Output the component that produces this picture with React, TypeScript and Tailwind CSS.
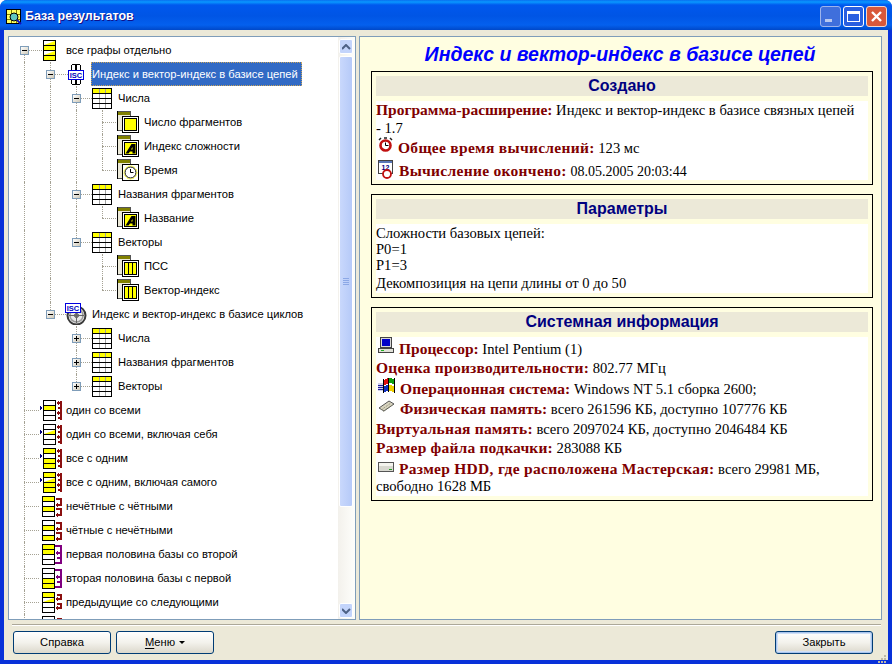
import type { ReactNode } from 'react'

type Cell = 'none' | 'through' | 'first' | 'last'
type Fill = 'y' | 'w' | 't'

const Svg = ({ w, h, children, className }: { w: number; h: number; children: ReactNode; className?: string }) => (
  <svg width={w} height={h} viewBox={`0 0 ${w} ${h}`} shapeRendering="crispEdges" className={className}>
    {children}
  </svg>
)

function TableIcon() {
  return (
    <Svg w={20} h={21}>
      <rect x="0.5" y="0.5" width="19" height="20" fill="#fff" stroke="#000" />
      <rect x="1" y="1" width="18" height="4" fill="#ffff00" />
      <path d="M7 1v19M13 1v19" stroke="#a0a0a0" />
      <path d="M0 5.5h20M0 10.5h20M0 15.5h20" stroke="#000" />
    </Svg>
  )
}

function Stack({ rows, x = 0 }: { rows: Fill[]; x?: number }) {
  return (
    <g transform={`translate(${x} 0)`}>
      <rect x="0.5" y="0.5" width="12" height="20" fill="#fff" stroke="#000" />
      {rows.map((r, i) => (
        <g key={i} transform={`translate(1 ${1 + i * 5})`}>
          {r === 'y' && <rect width="11" height="4" fill="#ffff00" />}
          {r === 't' && <path d="M0 4h11V0z" fill="#ffff00" shapeRendering="auto" />}
        </g>
      ))}
      <path d="M0 5.5h13M0 10.5h13M0 15.5h13" stroke="#000" />
    </g>
  )
}

function RootIcon() {
  return (
    <Svg w={14} h={21}>
      <Stack rows={['t', 'y', 't', 'y']} />
    </Svg>
  )
}

function Arrow({ y, x = 0, color }: { y: number; x?: number; color: string }) {
  return <path d={`M${x} ${y}l3-3v6z`} fill={color} stroke="none" />
}

function RelationIcon({ rows, color, kind, mark, x }: { rows: Fill[]; color: string; kind: string; mark?: boolean; x: number }) {
  return (
    <Svg w={26} h={22}>
      <g transform="translate(0 1)">
        {mark && <path d="M3 6l2 2-2 2z" fill="#000080" />}
        <Stack rows={rows} x={x} />
        <g transform={`translate(${x + 13} 0)`} fill="none" stroke={color} strokeWidth="2">
          {kind === 'many' && (
            <>
              <path d="M2 3h4M2 8h4M2 13h4M2 18h4M5 1v19" />
              <Arrow y={3} color={color} />
              <Arrow y={13} color={color} />
            </>
          )}
          {kind === 'pairs' && (
            <>
              <path d="M1 3h5v6H1M1 13h5v6H1" />
              <Arrow y={9} color={color} />
              <Arrow y={19} color={color} />
            </>
          )}
          {kind === 'half' && (
            <>
              <path d="M0 2h6v17H0" />
              <path d="M2 9h3M2 14h3" />
              <Arrow y={9} color={color} />
            </>
          )}
          {kind === 'next' && (
            <>
              <path d="M2 3h4v4H2M2 12h4v4H2" />
              <Arrow y={7} color={color} />
              <Arrow y={16} color={color} />
            </>
          )}
        </g>
      </g>
    </Svg>
  )
}

function IscBadge({ x, y }: { x: number; y: number }) {
  return (
    <g transform={`translate(${x} ${y})`}>
      <rect x="0.5" y="0.5" width="15" height="9" fill="#fff" stroke="#0000e0" strokeWidth="1.5" />
      <text x="8" y="8" textAnchor="middle" fontFamily="Liberation Sans, sans-serif" fontWeight="700" fontSize="7.5" fill="#0000c0">
        ISC
      </text>
    </g>
  )
}

function ChainIcon() {
  return (
    <Svg w={16} h={21}>
      <rect x="3.5" y="0.5" width="9" height="7" rx="2" fill="#fff" stroke="#000" strokeWidth="1" />
      <rect x="3.5" y="13.5" width="9" height="7" rx="2" fill="#fff" stroke="#000" strokeWidth="1" />
      <path d="M7 0h2v21H7z" fill="#000" />
      <IscBadge x={0} y={6} />
    </Svg>
  )
}

function CycleIcon() {
  return (
    <Svg w={22} h={22}>
      <g shapeRendering="auto">
        <circle cx="11.5" cy="12.5" r="9" fill="#e8e8e8" stroke="#3a3a3a" strokeWidth="2" />
        <circle cx="11.5" cy="12.5" r="6.5" fill="none" stroke="#9a9a9a" strokeWidth="1.5" />
        <circle cx="11.5" cy="12.5" r="2" fill="#999" stroke="#555" />
        <path d="M11.5 5v15M4 12.5h15" stroke="#666" />
      </g>
      <IscBadge x={0} y={0} />
    </Svg>
  )
}

function LeafIcon({ kind }: { kind: 'plain' | 'a' | 'clock' | 'bars' }) {
  return (
    <Svg w={22} h={22}>
      <rect x="0.5" y="0.5" width="13" height="19" fill="#ece9d8" stroke="#555" />
      <rect x="1" y="1" width="12" height="3" fill="#808000" />
      <path d="M0 0v20" stroke="#000" />
      <rect x="5.5" y="5.5" width="16" height="16" fill="#fff" stroke="#000" />
      {kind === 'plain' && <rect x="7.5" y="7.5" width="12" height="12" fill="#ffff00" stroke="#000" />}
      {kind === 'a' && (
        <g>
          <rect x="7.5" y="7.5" width="12" height="12" fill="#ffff00" stroke="#000" />
          <g shapeRendering="auto">
            <path d="M8.5 18.5l6-9.5h4v9.5h-3v-2h-2.5l-1.5 2z" fill="#000" />
            <path d="M14 14.5l1.5-2.5v2.5z" fill="#ffff00" />
          </g>
        </g>
      )}
      {kind === 'clock' && (
        <g shapeRendering="auto">
          <circle cx="13.5" cy="13.5" r="5.5" fill="#fff" stroke="#000" />
          <circle cx="13.5" cy="13.5" r="6.5" fill="none" stroke="#ffff00" strokeDasharray="2 1" />
          <path d="M13.5 10v3.5h3" fill="none" stroke="#000" />
        </g>
      )}
      {kind === 'bars' && (
        <g>
          <rect x="7.5" y="7.5" width="12" height="12" fill="#ffff00" stroke="#000" />
          <path d="M11.5 8v11M15.5 8v11" stroke="#000" />
        </g>
      )}
    </Svg>
  )
}

function TreeCell({ cell, hline, expander }: { cell: Cell; hline?: number; expander?: 'minus' | 'plus' }) {
  return (
    <div className="relative h-[24px] w-[26px] shrink-0">
      {cell === 'through' && <div className="absolute left-[13px] top-0 h-[24px] border-l border-dotted border-[#a5a294]" />}
      {cell === 'first' && <div className="absolute left-[13px] top-[12px] h-[12px] border-l border-dotted border-[#a5a294]" />}
      {cell === 'last' && <div className="absolute left-[13px] top-0 h-[12px] border-l border-dotted border-[#a5a294]" />}
      {hline && <div className="absolute left-[13px] top-[12px] border-t border-dotted border-[#a5a294]" style={{ width: hline }} />}
      {expander && (
        <div className="absolute left-[9px] top-[8px] flex h-[9px] w-[9px] items-center justify-center border border-[#7f9db9] bg-gradient-to-br from-white to-[#cfc9b8]">
          <div className="relative h-[1px] w-[5px] bg-black">
            {expander === 'plus' && <div className="absolute left-[2px] top-[-2px] h-[5px] w-[1px] bg-black" />}
          </div>
        </div>
      )}
    </div>
  )
}

interface Row {
  guides: Cell[]
  cell: Cell
  expander?: 'minus' | 'plus'
  icon: ReactNode
  text: string
  selected?: boolean
  hline?: number
}

const darkRed = '#8b1010'
const purple = '#800080'

const rows: Row[] = [
  { guides: [], cell: 'first', expander: 'minus', icon: <RootIcon />, text: 'все графы отдельно', hline: 18 },
  { guides: ['through'], cell: 'through', expander: 'minus', icon: <ChainIcon />, text: 'Индекс и вектор-индекс в базисе цепей', selected: true, hline: 18 },
  { guides: ['through', 'through'], cell: 'through', expander: 'minus', icon: <TableIcon />, text: 'Числа', hline: 16 },
  { guides: ['through', 'through', 'through'], cell: 'through', icon: <LeafIcon kind="plain" />, text: 'Число фрагментов', hline: 16 },
  { guides: ['through', 'through', 'through'], cell: 'through', icon: <LeafIcon kind="a" />, text: 'Индекс сложности', hline: 16 },
  { guides: ['through', 'through', 'through'], cell: 'last', icon: <LeafIcon kind="clock" />, text: 'Время', hline: 16 },
  { guides: ['through', 'through'], cell: 'through', expander: 'minus', icon: <TableIcon />, text: 'Названия фрагментов', hline: 16 },
  { guides: ['through', 'through', 'through'], cell: 'last', icon: <LeafIcon kind="a" />, text: 'Название', hline: 16 },
  { guides: ['through', 'through'], cell: 'last', expander: 'minus', icon: <TableIcon />, text: 'Векторы', hline: 16 },
  { guides: ['through', 'through', 'none'], cell: 'through', icon: <LeafIcon kind="bars" />, text: 'ПСС', hline: 16 },
  { guides: ['through', 'through', 'none'], cell: 'last', icon: <LeafIcon kind="bars" />, text: 'Вектор-индекс', hline: 16 },
  { guides: ['through'], cell: 'last', expander: 'minus', icon: <CycleIcon />, text: 'Индекс и вектор-индекс в базисе циклов', hline: 18 },
  { guides: ['through', 'none'], cell: 'through', expander: 'plus', icon: <TableIcon />, text: 'Числа', hline: 16 },
  { guides: ['through', 'none'], cell: 'through', expander: 'plus', icon: <TableIcon />, text: 'Названия фрагментов', hline: 16 },
  { guides: ['through', 'none'], cell: 'last', expander: 'plus', icon: <TableIcon />, text: 'Векторы', hline: 16 },
  { guides: [], cell: 'through', icon: <RelationIcon rows={['w', 'y', 'w', 'w']} color={darkRed} kind="many" mark x={6} />, text: 'один со всеми', hline: 15 },
  { guides: [], cell: 'through', icon: <RelationIcon rows={['w', 't', 'w', 'w']} color={darkRed} kind="many" mark x={6} />, text: 'один со всеми, включая себя', hline: 15 },
  { guides: [], cell: 'through', icon: <RelationIcon rows={['y', 'w', 'y', 'y']} color={darkRed} kind="many" mark x={6} />, text: 'все с одним', hline: 15 },
  { guides: [], cell: 'through', icon: <RelationIcon rows={['y', 't', 'y', 'y']} color={darkRed} kind="many" mark x={6} />, text: 'все с одним, включая самого', hline: 15 },
  { guides: [], cell: 'through', icon: <RelationIcon rows={['y', 'w', 'y', 'w']} color={darkRed} kind="pairs" x={5} />, text: 'нечётные с чётными', hline: 15 },
  { guides: [], cell: 'through', icon: <RelationIcon rows={['w', 'y', 'w', 'y']} color={darkRed} kind="pairs" x={5} />, text: 'чётные с нечётными', hline: 15 },
  { guides: [], cell: 'through', icon: <RelationIcon rows={['y', 'y', 'w', 'w']} color={purple} kind="half" x={5} />, text: 'первая половина базы со второй', hline: 15 },
  { guides: [], cell: 'through', icon: <RelationIcon rows={['w', 'w', 'y', 'y']} color={purple} kind="half" x={5} />, text: 'вторая половина базы с первой', hline: 15 },
  { guides: [], cell: 'through', icon: <RelationIcon rows={['y', 't', 'w', 'w']} color={darkRed} kind="next" x={5} />, text: 'предыдущие со следующими', hline: 15 },
  { guides: [], cell: 'through', icon: <RelationIcon rows={['w', 'w', 'y', 'y']} color={darkRed} kind="next" x={5} />, text: '', hline: 15 },
]

function TreeRow({ row }: { row: Row }) {
  return (
    <div className="flex h-[24px] shrink-0 items-center whitespace-nowrap">
      {row.guides.map((g, i) => (
        <TreeCell key={i} cell={g} />
      ))}
      <TreeCell cell={row.cell} expander={row.expander} hline={row.hline} />
      <div className="relative z-10 flex h-[24px] w-[26px] shrink-0 items-center justify-center">{row.icon}</div>
      {row.selected ? (
        <span className="ml-[2px] h-[24px] w-[211px] bg-[#316ac5] pl-[1px] leading-[24px] text-white outline-1 -outline-offset-1 outline-dotted outline-[#c9a45a]">
          {row.text}
        </span>
      ) : (
        <span className="ml-[3px] leading-[24px] text-black">{row.text}</span>
      )}
    </div>
  )
}

function ScrollButton({ up }: { up?: boolean }) {
  return (
    <div className="mx-[1px] flex h-[15px] w-[14px] shrink-0 items-center justify-center rounded-[2px] border border-white bg-[#c3d4fb]">
      <Svg w={9} h={6}>
        <path d={up ? 'M0 5l4-4 4 4' : 'M0 1l4 4 4-4'} fill="none" stroke="#4d6185" strokeWidth="2" shapeRendering="auto" />
      </Svg>
    </div>
  )
}

function Scrollbar() {
  return (
    <div className="flex w-[17px] shrink-0 flex-col bg-gradient-to-r from-[#f3f1ec] to-[#fefefb] pt-[2px]">
      <ScrollButton up />
      <div className="mx-[1px] mt-[2px] flex h-[451px] w-[14px] shrink-0 flex-col items-center justify-center gap-[1px] rounded-[2px] border border-white bg-gradient-to-r from-[#c9d8fc] to-[#b6caf8]">
        <div className="h-[1px] w-[6px] bg-[#8ca8e6]" />
        <div className="h-[1px] w-[6px] bg-[#8ca8e6]" />
        <div className="h-[1px] w-[6px] bg-[#8ca8e6]" />
        <div className="h-[1px] w-[6px] bg-[#8ca8e6]" />
      </div>
      <div className="flex-1" />
      <ScrollButton />
      <div className="h-[1px] shrink-0" />
    </div>
  )
}

function AlarmIcon() {
  return (
    <Svg w={15} h={15}>
      <g shapeRendering="auto">
        <circle cx="7.5" cy="8.5" r="5" fill="#fff" stroke="#c01010" strokeWidth="2.6" />
        <path d="M7.5 5.5v3h3" fill="none" stroke="#000" />
        <path d="M1 3l2-2M14 3l-2-2M6 1h3" stroke="#222" strokeWidth="1.5" />
      </g>
    </Svg>
  )
}

function CalendarIcon() {
  return (
    <Svg w={16} h={19}>
      <rect x="0.5" y="0.5" width="14" height="13" fill="#fff" stroke="#444" />
      <rect x="1" y="1" width="13" height="2" fill="#5a78b8" />
      <text x="7.5" y="10" textAnchor="middle" fontFamily="Liberation Sans, sans-serif" fontWeight="700" fontSize="7" fill="#000080">
        12
      </text>
      <g shapeRendering="auto">
        <circle cx="9" cy="14" r="4" fill="#fff" stroke="#c01010" strokeWidth="1.8" />
      </g>
    </Svg>
  )
}

function ComputerIcon() {
  return (
    <Svg w={16} h={16}>
      <rect x="2.5" y="0.5" width="11" height="10" fill="#d8d8d8" stroke="#444" />
      <rect x="4" y="2" width="8" height="7" fill="#0000c8" />
      <rect x="0.5" y="11.5" width="15" height="4" fill="#e0e0d8" stroke="#444" />
      <path d="M3 13.5h3" stroke="#20b020" />
    </Svg>
  )
}

function WindowsIcon() {
  return (
    <Svg w={17} h={15}>
      <rect x="0" y="5" width="5" height="8" fill="#d0d0e8" />
      <path d="M0 7h5M0 9h5M0 11h5" stroke="#2020a0" />
      <path d="M6 2l4-2v6l-4 1z" fill="#e01010" />
      <path d="M11 0l5 1v5l-5-1z" fill="#10a010" />
      <path d="M6 8l4-1v6l-4 1z" fill="#1030c0" />
      <path d="M11 7l5 1v6l-5-1z" fill="#f0d000" />
      <path d="M5.5 1v14M10.5 0v14M16 0v15" stroke="#000" />
    </Svg>
  )
}

function ChipIcon() {
  return (
    <Svg w={17} h={13}>
      <g shapeRendering="auto">
        <path d="M1 8l10-7 5 3-10 7z" fill="#d8d4c0" stroke="#555" />
        <path d="M3 10l10-7M5 11.5l10-7" stroke="#8a8a70" strokeDasharray="1 1" />
      </g>
    </Svg>
  )
}

function HddIcon() {
  return (
    <Svg w={16} h={12}>
      <rect x="0.5" y="1.5" width="15" height="9" rx="1" fill="#d8d8d0" stroke="#555" />
      <rect x="1" y="2" width="14" height="3" fill="#f4f4ee" />
      <path d="M11 8h3" stroke="#20a020" />
    </Svg>
  )
}

function B({ children, className }: { children: ReactNode; className?: string }) {
  return <b className={`font-bold text-[#800000] ${className ?? 'text-[15.5px]'}`}>{children}</b>
}

function InfoBox({ title, children }: { title: string; children: ReactNode }) {
  return (
    <div className="border border-black p-[4px]">
      <div className="flex h-[20px] items-center justify-center bg-[#ece9d8] font-['Liberation_Sans',sans-serif] text-[16px] font-bold text-[#000080]">
        {title}
      </div>
      <div className="mt-[5px] bg-white font-['Liberation_Serif',serif] text-[14.6px] text-black">{children}</div>
    </div>
  )
}

function Line({ h, icon, drop, children }: { h: string; icon?: ReactNode; drop?: string; children: ReactNode }) {
  return (
    <div className={h}>
      {icon && <span className={`mr-[5px] ml-[2px] inline-block ${drop ?? 'align-[1px]'}`}>{icon}</span>}
      {children}
    </div>
  )
}

function XpButton({ className, children, isDefault }: { className: string; children: ReactNode; isDefault?: boolean }) {
  return (
    <button className={`flex h-[23px] items-center justify-center rounded-[3px] border border-[#003c74] bg-gradient-to-b from-white via-[#f3f2ec] to-[#dcd8cc] ${isDefault ? 'shadow-[inset_0_0_0_1px_#a9c4ec,inset_0_0_0_2px_#cfe0f7]' : ''} ${className}`}>
      {children}
    </button>
  )
}

export default function App() {
  return (
    <div className="flex h-[664px] w-[892px] flex-col overflow-hidden rounded-t-[7px] bg-[#0831d9] font-['Liberation_Sans',sans-serif] text-[11.2px]">
      {/* title bar */}
      <div className="flex h-[30px] shrink-0 items-center bg-[linear-gradient(#0a6ef0_0,#0997ff_2px,#0058ee_5px,#0055e5_16px,#0460ee_25px,#0048c8_30px)] pl-[6px] pr-[5px] pt-[3px]">
        <Svg w={16} h={16}>
          <rect x="0.5" y="0.5" width="14" height="14" fill="#ffff60" stroke="#000" />
          <path d="M5 1v13M10 1v13M1 5h13M1 10h13" stroke="#808000" />
          <g shapeRendering="auto">
            <circle cx="8" cy="8" r="4" fill="#60c8c0" stroke="#000" />
            <path d="M11 11l4 4" stroke="#1010c0" strokeWidth="2" />
          </g>
        </Svg>
        <span className="ml-[3px] text-[12.5px] font-bold text-white [text-shadow:1px_1px_#0f1089]">База результатов</span>
        <div className="ml-auto flex gap-[2px]">
          <div className="flex h-[21px] w-[21px] items-end rounded-[3px] border border-[#9db4ec] bg-[#3f6fdc] pb-[4px] pl-[4px]">
            <div className="h-[3px] w-[7px] bg-[#b8c8f0]" />
          </div>
          <div className="flex h-[21px] w-[21px] items-center justify-center rounded-[3px] border border-white bg-[#2a5fe0]">
            <div className="h-[11px] w-[13px] border border-t-[3px] border-white" />
          </div>
          <div className="flex h-[21px] w-[21px] items-center justify-center rounded-[3px] border border-[#f0d8d0] bg-[#d8583a]">
            <Svg w={13} h={13}>
              <path d="M2 2l9 9M11 2l-9 9" stroke="#fff" strokeWidth="2.4" shapeRendering="auto" />
            </Svg>
          </div>
        </div>
      </div>

      {/* client area */}
      <div className="mx-[4px] mb-[4px] flex min-h-0 flex-1 flex-col bg-[#ece9d8] pt-[6px]">
        <div className="ml-[4px] mr-[6px] flex h-[584px] shrink-0 gap-[3px]">
          {/* tree */}
          <div className="flex w-[348px] shrink-0 border border-[#7f9db9] bg-white">
            <div className="flex min-w-0 flex-1 flex-col overflow-hidden pl-[2px] pt-[1px]">
              {rows.map((row, i) => (
                <TreeRow key={i} row={row} />
              ))}
            </div>
            <Scrollbar />
          </div>

          {/* report */}
          <div className="min-w-0 flex-1 border border-[#7f9db9] bg-[#fffee1] pl-[11px] pr-[8px]">
            <h1 className="flex h-[34px] items-center justify-center pr-[4px] pt-[2px] text-[19.5px] font-bold italic text-[#0000ff]">
              Индекс и вектор-индекс в базисе цепей
            </h1>
            <div className="flex flex-col gap-[9px]">
              <InfoBox title="Создано">
                <div className="leading-[18px]">
                  <B>Программа-расширение:</B> Индекс и вектор-индекс в базисе связных цепей
                  <br />- 1.7
                </div>
                <Line h="h-[21px] leading-[20px]" icon={<AlarmIcon />}>
                  <B className="text-[15.5px] tracking-[0.3px]">Общее время вычислений:</B> 123 мс
                </Line>
                <Line h="h-[22px] pt-[2px] leading-[20px]" icon={<CalendarIcon />} drop="align-[-3px]">
                  <B className="text-[15.5px] tracking-[0.3px]">Вычисление окончено:</B> <span className="text-[14px]">08.05.2005 20:03:44</span>
                </Line>
              </InfoBox>
              <InfoBox title="Параметры">
                <div className="pt-[1px] leading-[16px]">
                  Сложности базовых цепей:
                  <br />
                  P0=1
                  <br />
                  P1=3
                  <br />
                  <span className="leading-[20px]">Декомпозиция на цепи длины от 0 до 50</span>
                </div>
              </InfoBox>
              <InfoBox title="Системная информация">
                <Line h="h-[21px] leading-[21px]" icon={<ComputerIcon />}>
                  <B>Процессор:</B> Intel Pentium (1)
                </Line>
                <Line h="h-[20px] leading-[20px]">
                  <B className="text-[15.5px] tracking-[0.25px]">Оценка производительности:</B> 802.77 МГц
                </Line>
                <Line h="h-[21px] leading-[21px]" icon={<WindowsIcon />}>
                  <B className="text-[15.5px] tracking-[0.1px]">Операционная система:</B> Windows NT 5.1 сборка 2600;
                </Line>
                <Line h="h-[20px] leading-[20px]" icon={<ChipIcon />}>
                  <B className="text-[15.5px] tracking-[0.1px]">Физическая память:</B> всего 261596 КБ, доступно 107776 КБ
                </Line>
                <Line h="h-[19px] leading-[19px]">
                  <B className="text-[15.5px] tracking-[0.2px]">Виртуальная память:</B> всего 2097024 КБ, доступно 2046484 КБ
                </Line>
                <Line h="h-[20px] leading-[20px]">
                  <B className="text-[15.5px] tracking-[0.2px]">Размер файла подкачки:</B> 283088 КБ
                </Line>
                <Line h="h-[22px] leading-[22px]" icon={<HddIcon />}>
                  <B className="text-[15.5px] tracking-[0.3px]">Размер HDD, где расположена Мастерская:</B> всего 29981 МБ,
                </Line>
                <div className="h-[16px] leading-[12px]">свободно 1628 МБ</div>
              </InfoBox>
            </div>
          </div>
        </div>

        {/* separator */}
        <div className="ml-[8px] mr-[7px] mt-[4px] h-[2px] shrink-0 border-t border-[#aca899] bg-white" />

        {/* buttons */}
        <div className="relative ml-[9px] mr-[15px] mt-[5px] flex shrink-0 gap-[5px] text-black">
          <XpButton className="w-[98px]">Справка</XpButton>
          <XpButton className="w-[98px]">
            <span className="underline decoration-1 underline-offset-2">М</span>еню
            <span className="ml-[4px] h-0 w-0 border-x-[3px] border-t-[3px] border-x-transparent border-t-black" />
          </XpButton>
          <XpButton isDefault className="ml-auto w-[98px]">
            Закрыть
          </XpButton>
        </div>
        <div className="mt-auto flex justify-end pr-[1px] pb-[1px]">
          <Svg w={10} h={10}>
            <path d="M7 1h2v2H7zM4 4h2v2H4zM7 4h2v2H7zM1 7h2v2H1zM4 7h2v2H4zM7 7h2v2H7z" fill="#bdb9a6" />
          </Svg>
        </div>
      </div>
    </div>
  )
}
